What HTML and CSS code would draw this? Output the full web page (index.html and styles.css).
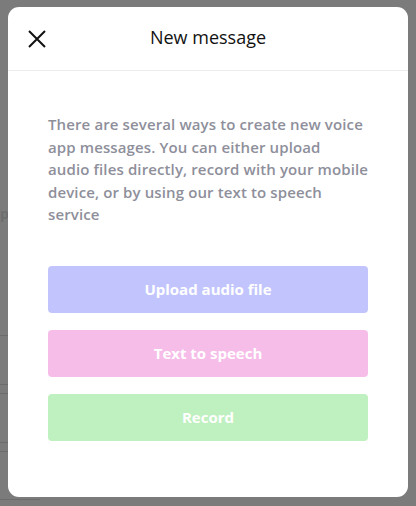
FILE: index.html
```html
<!DOCTYPE html>
<html lang="en">
<head>
  <meta charset="UTF-8">
  <meta name="viewport" content="width=device-width, initial-scale=1.0">
  <title>New message</title>
  <link rel="stylesheet" href="styles.css">
</head>
<body>
  <!-- dimmed page behind the modal -->
  <div class="behind">
    <span class="behind-text">p</span>
    <div class="behind-line" style="top: 335px"></div>
    <div class="behind-line" style="top: 384px"></div>
    <div class="behind-line" style="top: 393px"></div>
    <div class="behind-line" style="top: 442px"></div>
    <div class="behind-line" style="top: 451px"></div>
    <div class="behind-line" style="top: 499px"></div>
  </div>

  <div class="modal">
    <div class="modal-header">
      <button class="close" aria-label="Close">
        <svg width="18" height="18" viewBox="0 0 18 18">
          <path d="M1 1 L17 17 M17 1 L1 17" stroke="#111" stroke-width="2" fill="none"/>
        </svg>
      </button>
      <h1>New message</h1>
    </div>
    <div class="modal-body">
      <p>There are several ways to create new voice<br>
        app messages. You can either upload<br>
        audio files directly, record with your mobile<br>
        device, or by using our text to speech<br>
        service</p>
      <div class="actions">
        <button class="btn btn-upload">Upload audio file</button>
        <button class="btn btn-tts">Text to speech</button>
        <button class="btn btn-record">Record</button>
      </div>
    </div>
  </div>
</body>
</html>
```

FILE: styles.css
```css
body {
  margin: 0;
  padding: 7px 8px 8px;
  background-color: #7b7b7b;
  font-family: 'Open Sans', 'Liberation Sans', sans-serif;
  position: relative;
  height: 506px;
  box-sizing: border-box;
  overflow: hidden;
}
.behind {
  position: absolute;
  inset: 0;
}
.behind-text {
  position: absolute;
  left: 0;
  top: 204px;
  font-size: 14px;
  font-weight: bold;
  color: #6e6e6e;
}
.behind-line {
  position: absolute;
  left: 0;
  width: 40px;
  height: 1px;
  background-color: #6c6c6c;
}
.modal {
  position: relative;
  background-color: #fff;
  border-radius: 11px;
  height: 490px;
  overflow: hidden;
}
.modal-header {
  height: 63px;
  border-bottom: 1px solid #ececec;
  display: flex;
  align-items: center;
  justify-content: center;
  position: relative;
}
.modal-header h1 {
  margin: 0 0 4px;
  font-size: 18px;
  font-weight: normal;
  color: #111;
}
.close {
  position: absolute;
  left: 20px;
  top: 23px;
  padding: 0;
  border: none;
  background: none;
  width: 18px;
  height: 18px;
  cursor: pointer;
}
.close svg {
  display: block;
}
.modal-body {
  padding: 42px 40px 0;
}
.modal-body p {
  margin: 0 -12px 0 0;
  font-size: 15px;
  font-weight: 600;
  line-height: 22.5px;
  letter-spacing: 0.12px;
  color: #8e8f9b;
}
.actions {
  margin-top: 40px;
  display: flex;
  flex-direction: column;
  gap: 17px;
}
.btn {
  height: 47px;
  border: none;
  border-radius: 4px;
  color: #fff;
  font-family: inherit;
  font-size: 15px;
  font-weight: bold;
  cursor: pointer;
}
.btn-upload {
  background-color: #c2c5fd;
}
.btn-tts {
  background-color: #f6bde9;
}
.btn-record {
  background-color: #bff0bf;
}
```
